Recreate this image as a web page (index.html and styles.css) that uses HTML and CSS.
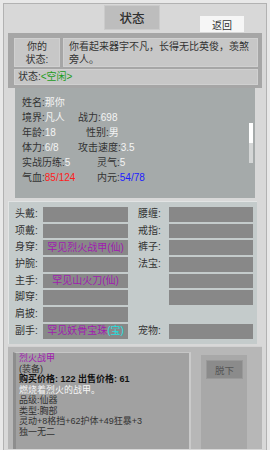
FILE: index.html
```html
<!DOCTYPE html>
<html lang="zh">
<head>
<meta charset="utf-8">
<link rel="stylesheet" href="styles.css">
</head>
<body>
<div class="frame">
  <div class="header">
    <div class="title">状态</div>
    <div class="back">返回</div>
  </div>
  <div class="status">
    <div class="status-top">
      <div class="cell cell-label">你的<br>状态:</div>
      <div class="cell cell-desc">你看起来器宇不凡，长得无比英俊，羡煞旁人。</div>
    </div>
    <div class="cell cell-state">状态:<span class="green">&lt;空闲&gt;</span></div>
  </div>
  <div class="stats">
    <div class="srow"><span class="k">姓名:</span><span class="v">那你</span></div>
    <div class="srow"><span class="c56"><span class="k">境界:</span><span class="v">凡人</span></span><span class="k">战力:</span><span class="v">698</span></div>
    <div class="srow"><span class="c64"><span class="k">年龄:</span><span class="v">18</span></span><span class="k">性别:</span><span class="v">男</span></div>
    <div class="srow"><span class="c56"><span class="k">体力:</span><span class="v">6/8</span></span><span class="k">攻击速度:</span><span class="v">3.5</span></div>
    <div class="srow"><span class="c75"><span class="k">实战历练:</span><span class="v">5</span></span><span class="k">灵气:</span><span class="v">5</span></div>
    <div class="srow"><span class="c75"><span class="k">气血:</span><span class="red">85/124</span></span><span class="k">内元:</span><span class="blue">54/78</span></div>
    <div class="scroll"><div class="thumb"></div></div>
  </div>
  <div class="equip">
    <div class="ecol left">
      <div class="erow"><span class="lab">头戴:</span><span class="box"></span></div>
      <div class="erow"><span class="lab">项戴:</span><span class="box"></span></div>
      <div class="erow"><span class="lab">身穿:</span><span class="box purple">罕见烈火战甲(仙)</span></div>
      <div class="erow"><span class="lab">护腕:</span><span class="box"></span></div>
      <div class="erow"><span class="lab">主手:</span><span class="box purple">罕见山火刀(仙)</span></div>
      <div class="erow"><span class="lab">脚穿:</span><span class="box"></span></div>
      <div class="erow"><span class="lab">肩披:</span><span class="box"></span></div>
      <div class="erow"><span class="lab">副手:</span><span class="box purple">罕见妖骨宝珠<span class="cyan">(宝)</span></span></div>
    </div>
    <div class="ecol right">
      <div class="erow"><span class="lab">腰缠:</span><span class="box"></span></div>
      <div class="erow"><span class="lab">戒指:</span><span class="box"></span></div>
      <div class="erow"><span class="lab">裤子:</span><span class="box"></span></div>
      <div class="erow"><span class="lab">法宝:</span><span class="box"></span></div>
      <div class="erow"><span class="lab"></span><span class="box"></span></div>
      <div class="erow"><span class="lab"></span><span class="box"></span></div>
      <div class="erow"></div>
      <div class="erow"><span class="lab">宠物:</span><span class="box"></span></div>
    </div>
  </div>
  <div class="bottom">
    <div class="desc">
      <div class="purple">烈火战甲</div>
      <div>(装备)</div>
      <div class="bold">购买价格: 122 出售价格: 61</div>
      <div class="white">燃烧着烈火的战甲。</div>
      <div>品级:仙器</div>
      <div>类型:胸部</div>
      <div>灵动+8格挡+62护体+49狂暴+3</div>
      <div>独一无二</div>
    </div>
    <div class="side">
      <div class="off">脱下</div>
    </div>
  </div>
</div>
</body>
</html>
```

FILE: styles.css
```css
* { box-sizing: border-box; }
html, body {
  margin: 0;
  padding: 0;
}
body {
  width: 270px;
  height: 450px;
  overflow: hidden;
  background: #e8e8e8;
  font-family: "Liberation Sans", "Noto Sans CJK SC", sans-serif;
  color: #333;
  font-size: 10px;
}
.frame {
  margin: 3px 3px 0 3px;
  height: 447px;
  border: 1px solid #b2b2b2;
  border-bottom: none;
  background: #d8d8d8;
  overflow: hidden;
}
.header {
  display: flex;
  height: 29px;
}
.title {
  margin-left: 100px;
  margin-top: 1px;
  width: 56px;
  height: 25px;
  background: #bdbdbd;
  border: 1px solid #cbcbcb;
  display: flex;
  align-items: center;
  justify-content: center;
  font-size: 12.5px;
  font-weight: 500;
  color: #2e2e2e;
}
.back {
  margin-left: 40px;
  margin-top: 12px;
  width: 44px;
  height: 16px;
  background: #f6f6f6;
  display: flex;
  align-items: center;
  justify-content: center;
  font-size: 10px;
}
.status {
  margin: 0 4px;
  height: 55px;
  padding: 5px 4px 3px 6px;
  background: #a6a6a6;
}
.status-top {
  display: grid;
  grid-template-columns: 46px 1fr;
  gap: 3px;
  height: 29px;
}
.cell {
  background: #c7c7c7;
  border: 1px solid #d0d0d0;
}
.cell-label {
  text-align: center;
  line-height: 13px;
  padding-top: 1px;
}
.cell-desc {
  padding: 1px 4px 0 5px;
  line-height: 13px;
}
.cell-state {
  margin-top: 2px;
  height: 16px;
  line-height: 14px;
  padding-left: 3px;
}
.green { color: #1c9c1c; }
.stats {
  position: relative;
  margin-left: 11px;
  width: 240px;
  height: 110px;
  background: #a5aaaa;
  padding: 7px 0 0 7px;
}
.srow {
  display: flex;
  height: 15px;
  line-height: 15px;
}
.k { color: #333; }
.v { color: #f4f4f4; }
.red { color: #ff1c1c; }
.blue { color: #1c1cff; }
.c56 { width: 56px; }
.c64 { width: 64px; }
.c75 { width: 75px; }
.scroll {
  position: absolute;
  left: 234px;
  top: 35px;
  width: 4px;
  height: 40px;
  background: #d4d6d6;
}
.thumb {
  height: 20px;
  background: #ffffff;
}
.equip {
  margin: 3px 0 0 4px;
  width: 249px;
  height: 143px;
  background: #c4cbcb;
  border-top: 1px solid #e2e4e4;
  border-left: 1px solid #e2e4e4;
  padding: 5px 0 0 6px;
  display: flex;
  gap: 10px;
}
.ecol {
  display: flex;
  flex-direction: column;
  gap: 2px;
}
.erow {
  display: flex;
  height: 14.7px;
}
.left .lab { width: 28px; }
.left .box { width: 85px; }
.right .lab { width: 31px; }
.right .box { width: 84px; }
.lab {
  line-height: 14.7px;
  color: #333;
}
.box {
  background: #888888;
  display: flex;
  align-items: center;
  justify-content: center;
  line-height: 14px;
}
.purple { color: #a01ab0; }
.cyan { color: #22e0e0; }
.bottom {
  margin: 2px 0 0 4px;
  width: 254px;
  height: 103px;
  background: #b7b7b7;
  border-top: 1px solid #d2d2d2;
  padding: 5px 0 0 5px;
  display: flex;
  align-items: stretch;
}
.desc {
  width: 178px;
  background: #a1a1a1;
  border-left: 3px solid #8d8d8d;
  border-top: 1px solid #c6c6c6;
  border-right: 2px solid #cacaca;
  padding: 0 0 0 3px;
  font-size: 9px;
  line-height: 10.5px;
  color: #333;
  overflow: hidden;
}
.desc .bold { font-weight: bold; color: #111; }
.desc .white { color: #f6f6f6; }
.side {
  margin: 3px 0 0 10px;
  width: 46px;
  background: #a8a8a8;
  padding: 5px 0 0 5px;
}
.off {
  width: 37px;
  height: 19px;
  background: #8b8b8b;
  border: 1px solid #999;
  display: flex;
  align-items: center;
  justify-content: center;
  font-size: 9.5px;
  color: #555;
}
```
